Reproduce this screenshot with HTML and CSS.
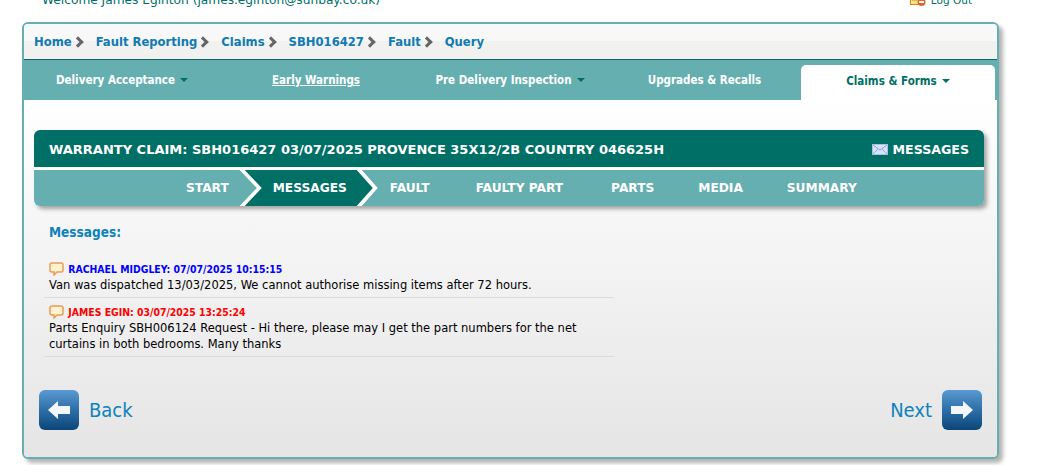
FILE: index.html
```html
<!DOCTYPE html>
<html lang="en">
<head>
    <meta charset="UTF-8">
    <title>Warranty Claim</title>
    <link rel="stylesheet" href="styles.css">
</head>
<body>
    <!-- Top bar -->
    <div class="topbar">
        <span class="welcome">Welcome James Eginton (james.eginton@sunbay.co.uk)</span>
        <span class="logout">
            <svg class="logout-icon" width="16" height="14" viewBox="0 0 16 14">
                <rect x="0.5" y="0.5" width="12" height="11" fill="#fbe08a" stroke="#c98a1e"/>
                <path d="M2 4h8M2 7h5" stroke="#c98a1e"/>
                <circle cx="11.5" cy="9" r="4" fill="#e2622b"/>
                <rect x="9" y="8" width="5" height="2" fill="#fff"/>
            </svg>
            Log Out
        </span>
    </div>

    <div class="panel">
        <!-- Breadcrumb -->
        <div class="crumbs">
            <a>Home</a><i class="sep"></i>
            <a>Fault Reporting</a><i class="sep"></i>
            <a>Claims</a><i class="sep"></i>
            <a>SBH016427</a><i class="sep"></i>
            <a>Fault</a><i class="sep"></i>
            <a>Query</a>
        </div>

        <!-- Main menu -->
        <div class="menu">
            <div class="menu-item item-wide">Delivery Acceptance<b class="caret"></b></div>
            <div class="menu-item item-narrow"><u>Early Warnings</u></div>
            <div class="menu-item item-wide">Pre Delivery Inspection<b class="caret"></b></div>
            <div class="menu-item item-upgrades">Upgrades &amp; Recalls</div>
            <div class="menu-item active">Claims &amp; Forms<b class="caret"></b></div>
        </div>

        <div class="content">
            <div class="claim">
                <div class="claim-head">
                    <span>WARRANTY CLAIM: SBH016427 03/07/2025 PROVENCE 35X12/2B COUNTRY 046625H</span>
                    <span class="claim-msgs">
                        <svg width="16" height="11" viewBox="0 0 16 11">
                            <rect x="0.5" y="0.5" width="15" height="10" fill="#d5e3f7" stroke="#a9c1e6"/>
                            <path d="M1 1l7 5 7-5M1 10l5-5M15 10l-5-5" fill="none" stroke="#8fabd8"/>
                        </svg>
                        MESSAGES
                    </span>
                </div>
                <div class="steps">
                    <span class="step step-start">START</span>
                    <span class="step step-current"><span class="step-label">MESSAGES</span></span>
                    <span class="step step-fault">FAULT</span>
                    <span class="step step-part">FAULTY PART</span>
                    <span class="step step-parts">PARTS</span>
                    <span class="step step-media">MEDIA</span>
                    <span class="step">SUMMARY</span>
                </div>
            </div>

            <h2 class="msg-title">Messages:</h2>

            <div class="msg-list">
                <div class="msg">
                    <div class="msg-from from-blue">
                        <svg class="bubble" width="15" height="14" viewBox="0 0 15 14">
                            <path d="M3 1h9a2 2 0 0 1 2 2v5a2 2 0 0 1-2 2H8l-3 3v-3H3a2 2 0 0 1-2-2V3a2 2 0 0 1 2-2z" fill="#fff2cc" stroke="#e99d5a" stroke-width="1.5"/>
                        </svg>
                        RACHAEL MIDGLEY: 07/07/2025 10:15:15
                    </div>
                    <div>Van was dispatched 13/03/2025, We cannot authorise missing items after 72 hours.</div>
                </div>
                <div class="msg">
                    <div class="msg-from from-red">
                        <svg class="bubble" width="15" height="14" viewBox="0 0 15 14">
                            <path d="M3 1h9a2 2 0 0 1 2 2v5a2 2 0 0 1-2 2H8l-3 3v-3H3a2 2 0 0 1-2-2V3a2 2 0 0 1 2-2z" fill="#fff2cc" stroke="#e99d5a" stroke-width="1.5"/>
                        </svg>
                        JAMES EGIN: 03/07/2025 13:25:24
                    </div>
                    <div>Parts Enquiry SBH006124 Request - Hi there, please may I get the part numbers for the net curtains in both bedrooms. Many thanks</div>
                </div>
            </div>

            <div class="nav-btns">
                <div class="nav-btn">
                    <span class="arrow-btn">
                        <svg width="24" height="20" viewBox="0 0 24 20"><path d="M1 10l10-9v5h12v8H11v5z" fill="#f4f7fa"/></svg>
                    </span>
                    Back
                </div>
                <div class="nav-btn">
                    Next
                    <span class="arrow-btn">
                        <svg width="24" height="20" viewBox="0 0 24 20"><path d="M23 10l-10-9v5H1v8h12v5z" fill="#f4f7fa"/></svg>
                    </span>
                </div>
            </div>
        </div>
    </div>
</body>
</html>
```

FILE: styles.css
```css
body {
    font-family: 'DejaVu Sans', Verdana, sans-serif;
    font-size: 11.5px;
    background-color: #fff;
    color: #000;
    margin: 0;
    padding-bottom: 6px;
    overflow: hidden;
}
.topbar {
    display: flex;
    justify-content: space-between;
    width: 972px;
    height: 29px;
    margin-top: -7px;
    padding-left: 42px;
    color: #006f66;
    font-size: 12.2px;
    line-height: 15px;
    box-sizing: border-box;
}
.logout {
    font-size: 10.5px;
}
.logout-icon {
    vertical-align: -3px;
    margin-right: 2px;
}

.panel {
    width: 977px;
    height: 437px;
    margin-left: 22px;
    border: 2px solid #66afb0;
    border-radius: 6px;
    box-shadow: 4px 4px 4px rgba(0, 0, 0, 0.3);
    box-sizing: border-box;
    background-color: #fff;
    overflow: hidden;
}

/* Breadcrumb */
.crumbs {
    display: flex;
    align-items: center;
    height: 35px;
    padding-left: 10px;
    background: linear-gradient(#f8f8f8 50%, #f1f1f0 50%);
    border-bottom: 1px solid #0a6a63;
    font-size: 11.6px;
    font-weight: bold;
    color: #0f7ab4;
}
.sep {
    width: 5px;
    height: 5px;
    margin: 1px 14px 0 2px;
    border-top: 3px solid #666;
    border-right: 3px solid #666;
    transform: rotate(45deg);
}

/* Menu */
.menu {
    display: flex;
    height: 40px;
    background-color: #66afb0;
    color: #fff;
    font-family: 'DejaVu Sans Condensed', 'DejaVu Sans', sans-serif;
    font-size: 11.5px;
    font-weight: bold;
}
.menu-item {
    text-align: center;
    line-height: 40px;
}
.item-wide { width: 196px; }
.item-narrow { width: 192px; }
.item-upgrades { width: 193px; }
.caret {
    display: inline-block;
    margin-left: 5px;
    vertical-align: 2px;
    border-left: 4px solid transparent;
    border-right: 4px solid transparent;
    border-top: 4px solid #006f66;
}
.menu-item.active {
    width: 194px;
    height: 35px;
    margin-top: 5px;
    line-height: 32px;
    background-color: #fff;
    color: #006f66;
    border-radius: 5px 5px 0 0;
}

/* Content */
.content {
    height: 358px;
    padding: 30px 13px 0 10px;
    background: linear-gradient(#fff, #e5e5e5);
    box-sizing: border-box;
}
.claim {
    border-radius: 6px;
    box-shadow: 3px 3px 4px rgba(0, 0, 0, 0.35);
    overflow: hidden;
    font-weight: bold;
    color: #fff;
}
.claim-head {
    display: flex;
    justify-content: space-between;
    align-items: center;
    height: 37px;
    padding: 1px 15px 0;
    background-color: #006f66;
    font-size: 13px;
    box-sizing: border-box;
}
.claim-msgs {
    font-size: 12.6px;
}
.claim-msgs svg {
    vertical-align: -1px;
}
.steps {
    display: flex;
    align-items: center;
    height: 36px;
    padding-left: 152px;
    border-top: 3px solid #fff;
    background-color: #66afb0;
    font-size: 12.2px;
}
.step-start { margin-right: 11px; }
.step-fault { margin-right: 46px; }
.step-part { margin-right: 48px; }
.step-parts { margin-right: 44px; }
.step-media { margin-right: 44px; }
.step-current {
    display: flex;
    align-items: center;
    justify-content: center;
    position: relative;
    align-self: stretch;
    width: 138px;
    margin-right: 12px;
}
/* Chevron behind the current step: white outline, dark fill */
.step-current::before,
.step-current::after {
    content: "";
    position: absolute;
    top: 0;
    bottom: 0;
    left: 0;
    right: 0;
}
.step-current::before {
    background-color: #fff;
    clip-path: polygon(0 0, 122px 0, 138px 50%, 122px 100%, 0 100%, 17px 50%);
}
.step-current::after {
    background-color: #006f66;
    clip-path: polygon(5px 0, 117px 0, 133px 50%, 117px 100%, 5px 100%, 22px 50%);
}
.step-label {
    position: relative;
    z-index: 1;
    left: 1px;
}

/* Messages */
.msg-title {
    margin: 17px 0 0 15px;
    font-family: 'DejaVu Sans Condensed', 'DejaVu Sans', sans-serif;
    font-size: 13.5px;
    line-height: 18px;
    color: #0d82bc;
}
.msg-list {
    width: 570px;
    margin: 14px 0 0 10px;
}
.msg {
    padding: 7px 5px 4px;
    border-bottom: 1px solid #dcdcdc;
    line-height: 16px;
}
.msg-from {
    font-family: 'DejaVu Sans Condensed', 'DejaVu Sans', sans-serif;
    font-size: 10.4px;
    font-weight: bold;
    line-height: 15px;
}
.from-blue { color: #0000ff; }
.from-red { color: #ff0000; }
.bubble {
    vertical-align: -3px;
    margin-right: 1px;
}

/* Back and Next */
.nav-btns {
    display: flex;
    justify-content: space-between;
    margin: 33px 2px 0 5px;
}
.nav-btn {
    display: flex;
    align-items: center;
    gap: 10px;
    font-family: 'DejaVu Sans Condensed', 'DejaVu Sans', sans-serif;
    font-size: 20px;
    color: #0d82bc;
}
.arrow-btn {
    display: flex;
    align-items: center;
    justify-content: center;
    width: 40px;
    height: 40px;
    border-radius: 6px;
    background: linear-gradient(#5a9ad2, #2f6fa8 50%, #0b4577);
}
```
